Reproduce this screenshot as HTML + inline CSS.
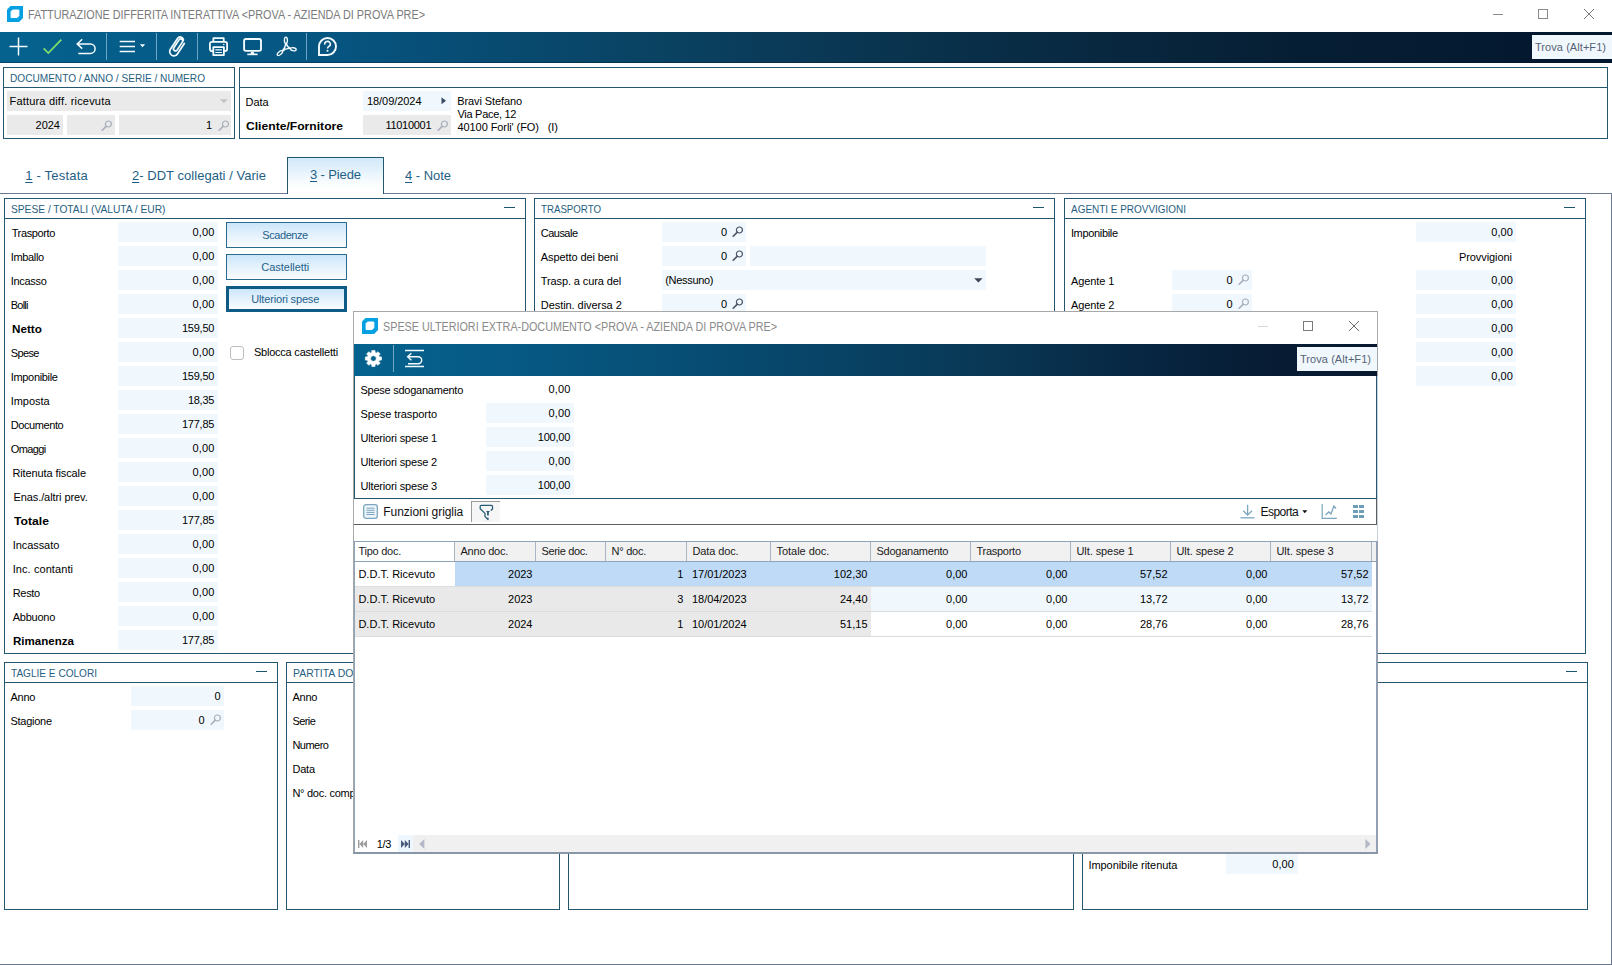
<!DOCTYPE html>
<html><head><meta charset="utf-8"><title>Fatturazione differita interattiva</title><style>
html,body{margin:0;padding:0;}
body{width:1612px;height:965px;overflow:hidden;background:#fff;position:relative;font-family:"Liberation Sans", sans-serif;font-size:11px;}
div,span.t,svg{position:absolute;box-sizing:border-box;}
span.t{white-space:pre;line-height:normal;}
u{text-decoration:underline;text-underline-offset:2px;}
</style></head><body>
<svg style="left:7px;top:6px;" width="16" height="16" viewBox="0 0 16 16"><path d="M3.5 0 H16 V12.1 L12.1 16 H0 V3.5 Z" fill="#04a0e2"/><path d="M5.6 4 H11.85 V9.8 L10.1 11.55 H4.1 V5.5 Z" fill="#fff" stroke="#fff" stroke-width="1" stroke-linejoin="round"/></svg>
<span class="t" style="left:27.60px;top:8px;font-size:12px;color:#7b7b7b;transform:scaleX(0.9035);transform-origin:0 0;">FATTURAZIONE DIFFERITA INTERATTIVA &lt;PROVA - AZIENDA DI PROVA PRE&gt;</span>
<div style="left:1493px;top:14px;width:10px;height:1px;background:#8a8a8a;"></div>
<div style="left:1538px;top:9px;width:10px;height:10px;border:1px solid #8a8a8a;"></div>
<svg style="left:1584px;top:9px;" width="10" height="10" viewBox="0 0 10 10"><path d="M0 0 L10 10 M10 0 L0 10" stroke="#7a7a7a" stroke-width="1"/></svg>
<div style="left:0px;top:32px;width:1612px;height:31px;background:linear-gradient(90deg,#05628e 0px,#065480 340px,#0a4262 660px,#092d46 1000px,#061e34 1300px,#04192f 1530px,#04192f 1612px);"></div>
<div style="left:0px;top:62px;width:1612px;height:1px;background:rgba(0,20,50,0.35);"></div>
<svg style="left:9px;top:37px;" width="19" height="19" viewBox="0 0 19 19"><path d="M9.5 0.5 V18.5 M0.5 9.5 H18.5" stroke="#f4fbff" stroke-width="1.5" fill="none"/></svg>
<svg style="left:42px;top:38px;" width="21" height="17" viewBox="0 0 21 17"><path d="M1.6 10.4 L6.3 15 L19.3 1.6" stroke="#82de6c" stroke-width="1.7" fill="none" stroke-linejoin="miter"/></svg>
<svg style="left:76px;top:38px;" width="21" height="17" viewBox="0 0 21 17"><path d="M6.2 1.2 L1.2 5.9 L6.2 10.6 M1.2 5.9 H14.3 A4.8 4.8 0 0 1 14.3 15.5 H2.3" stroke="#f4fbff" stroke-width="1.5" fill="none"/></svg>
<div style="left:106px;top:33px;width:1px;height:27px;background:rgba(190,230,255,0.55);"></div>
<svg style="left:119px;top:40px;" width="28" height="13" viewBox="0 0 28 13"><path d="M0.7 1.4 H16 M0.7 6.4 H16 M0.7 11.4 H16" stroke="#f4fbff" stroke-width="1.5"/><path d="M20.8 4.2 H26.2 L23.5 7.2 Z" fill="#f4fbff"/></svg>
<div style="left:156px;top:33px;width:1px;height:27px;background:rgba(190,230,255,0.55);"></div>
<svg style="left:164px;top:33px;" width="30" height="28" viewBox="0 0 30 28"><g transform="translate(9.9 18.6) rotate(33.6)"><path d="M4.2 -12.5 V0 A4.2 4.2 0 0 1 -4.2 0 V-13.2 A3 3 0 0 1 1.8 -13.2 V-3.2 A2 2 0 0 1 -2.2 -3.2 V-12.6 A2 2 0 0 1 1.8 -12.6" stroke="#f4fbff" stroke-width="1.7" fill="none" stroke-linecap="round"/></g></svg>
<div style="left:197px;top:33px;width:1px;height:27px;background:rgba(190,230,255,0.55);"></div>
<svg style="left:208px;top:36px;" width="21" height="21" viewBox="0 0 21 21"><g stroke="#f4fbff" stroke-width="1.8" fill="none" stroke-linejoin="round"><path d="M5.4 5.9 V2.1 H15.7 V5.9"/><path d="M5.3 15.1 H3.9 A2 2 0 0 1 1.9 13.1 V7.9 A2 2 0 0 1 3.9 5.9 H17.1 A2 2 0 0 1 19.1 7.9 V13.1 A2 2 0 0 1 17.1 15.1 H15.9"/><rect x="5.3" y="11.2" width="10.6" height="7.9"/><path d="M7.3 13.9 H13.9 M7.3 16.5 H13.9" stroke-width="1.1"/></g><circle cx="15.8" cy="8.5" r="0.8" fill="#f4fbff"/></svg>
<svg style="left:242px;top:37px;" width="21" height="19" viewBox="0 0 21 19"><rect x="2.1" y="2" width="16.9" height="11.9" rx="1.8" stroke="#f4fbff" stroke-width="1.9" fill="none"/><path d="M9.2 14.8 H11.6 L12.6 17 H8.2 Z" fill="#f4fbff"/><path d="M5.3 17.4 H15.6" stroke="#f4fbff" stroke-width="1.6"/></svg>
<svg style="left:276px;top:36px;" width="22" height="21" viewBox="0 0 22 21"><g stroke="#f4fbff" fill="none" stroke-width="1.35"><ellipse cx="9.9" cy="4.3" rx="1.5" ry="3.2"/><ellipse cx="17.3" cy="13.2" rx="2.9" ry="1.5" transform="rotate(12 17.3 13.2)"/><ellipse cx="3.9" cy="17.1" rx="3.2" ry="1.5" transform="rotate(-40 3.9 17.1)"/><path d="M9.8 7.4 C9.5 10.4 8.2 13.2 6.3 15.1 M10.3 7.4 C10.8 9.8 12.4 11.7 14.6 12.5 M6.3 15.1 C8.6 13.1 11.6 12.1 14.6 12.5" stroke-width="1.4"/></g></svg>
<div style="left:306px;top:33px;width:1px;height:27px;background:rgba(190,230,255,0.55);"></div>
<svg style="left:317px;top:36px;" width="21" height="21" viewBox="0 0 21 21"><path d="M2 19 V10.5 A8.5 8.5 0 1 1 10.5 19 Z" stroke="#f4fbff" stroke-width="1.9" fill="none"/><path d="M7.8 8.6 A2.8 2.6 0 1 1 11.9 10.3 C10.9 10.9 10.5 11.4 10.5 12.5" stroke="#f4fbff" stroke-width="1.5" fill="none"/><circle cx="10.5" cy="14.7" r="1.0" fill="#f4fbff"/></svg>
<div style="left:1532px;top:35px;width:80px;height:24px;background:#f0f8fe;"></div>
<span class="t" style="left:1535.00px;top:41px;font-size:11px;color:#566273;letter-spacing:0.061px;">Trova (Alt+F1)</span>
<div style="left:3px;top:67px;width:232px;height:72px;background:#fff;border:1px solid #24566f;"></div>
<div style="left:3px;top:87px;width:232px;height:1px;background:#24566f;"></div>
<span class="t" style="left:9.50px;top:72px;font-size:11px;color:#27607f;transform:scaleX(0.9176);transform-origin:0 0;">DOCUMENTO / ANNO / SERIE / NUMERO</span>
<div style="left:7px;top:91px;width:224px;height:20px;background:#eaeaea;"></div>
<span class="t" style="left:9.50px;top:95px;font-size:11px;color:#000;letter-spacing:0.190px;">Fattura diff. ricevuta</span>
<svg style="left:220px;top:99px;" width="8" height="5" viewBox="0 0 8 5"><path d="M0 0.3 H7.6 L3.8 4.2 Z" fill="#c3c3c3"/></svg>
<div style="left:7px;top:115px;width:56px;height:20px;background:#eaeaea;"></div>
<span class="t" style="left:35.52px;top:119px;font-size:11px;color:#000;">2024</span>
<div style="left:67px;top:115px;width:48px;height:20px;background:#eaeaea;"></div>
<svg style="left:101px;top:120px;" width="12" height="11" viewBox="0 0 12 11"><circle cx="7.4" cy="4.0" r="3.0" fill="none" stroke="#a9afbb" stroke-width="1.2"/><path d="M5.1 6.4 L1.2 10.2" stroke="#a9afbb" stroke-width="1.6" stroke-linecap="round"/></svg>
<div style="left:119px;top:115px;width:112px;height:20px;background:#eaeaea;"></div>
<span class="t" style="left:205.88px;top:119px;font-size:11px;color:#000;">1</span>
<svg style="left:218px;top:120px;" width="12" height="11" viewBox="0 0 12 11"><circle cx="7.4" cy="4.0" r="3.0" fill="none" stroke="#a9afbb" stroke-width="1.2"/><path d="M5.1 6.4 L1.2 10.2" stroke="#a9afbb" stroke-width="1.6" stroke-linecap="round"/></svg>
<div style="left:239px;top:67px;width:1369px;height:72px;background:#fff;border:1px solid #24566f;"></div>
<div style="left:239px;top:87px;width:1369px;height:1px;background:#24566f;"></div>
<span class="t" style="left:245.50px;top:96px;font-size:11px;color:#000;">Data</span>
<span class="t" style="left:246.00px;top:120px;font-size:11px;color:#000;font-weight:bold;transform:scaleX(1.1021);transform-origin:0 0;">Cliente/Fornitore</span>
<div style="left:363px;top:91px;width:88px;height:20px;background:#f0f8fe;"></div>
<span class="t" style="left:367.00px;top:95px;font-size:11px;color:#000;letter-spacing:-0.062px;">18/09/2024</span>
<svg style="left:441px;top:97px;" width="6" height="8" viewBox="0 0 6 8"><path d="M0.5 0.3 L5 3.8 L0.5 7.3 Z" fill="#3a4a66"/></svg>
<div style="left:363px;top:115px;width:88px;height:20px;background:#eaeaea;"></div>
<span class="t" style="left:385.50px;top:119px;font-size:11px;color:#000;letter-spacing:-0.304px;">11010001</span>
<svg style="left:437px;top:120px;" width="12" height="11" viewBox="0 0 12 11"><circle cx="7.4" cy="4.0" r="3.0" fill="none" stroke="#a9afbb" stroke-width="1.2"/><path d="M5.1 6.4 L1.2 10.2" stroke="#a9afbb" stroke-width="1.6" stroke-linecap="round"/></svg>
<span class="t" style="left:457.20px;top:95px;font-size:11px;color:#000;letter-spacing:-0.087px;">Bravi Stefano</span>
<span class="t" style="left:457.50px;top:107.5px;font-size:11px;color:#000;letter-spacing:-0.290px;">Via Pace, 12</span>
<span class="t" style="left:457.50px;top:120.5px;font-size:11px;color:#000;letter-spacing:-0.084px;">40100 Forli&#x27; (FO)   (I)</span>
<div style="left:0px;top:193px;width:1612px;height:1px;background:#6b7a90;"></div>
<div style="left:1611px;top:193px;width:1px;height:772px;background:#6b7a90;"></div>
<div style="left:0px;top:964px;width:1612px;height:1px;background:#6b7a90;"></div>
<div style="left:287px;top:157px;width:97px;height:37px;background:linear-gradient(180deg,#d2e9f9 0%,#e4f2fc 35%,#f6fbfe 65%,#ffffff 85%);border:1px solid #24566f;border-bottom:none;"></div>
<span class="t" style="left:25.20px;top:168px;font-size:13px;color:#1f5f85;letter-spacing:0.203px;"><u>1</u> - Testata</span>
<span class="t" style="left:132.00px;top:168px;font-size:13px;color:#1f5f85;letter-spacing:0.035px;"><u>2</u>- DDT collegati / Varie</span>
<span class="t" style="left:310.00px;top:167px;font-size:13px;color:#1f5f85;letter-spacing:-0.131px;"><u>3</u> - Piede</span>
<span class="t" style="left:405.00px;top:168px;font-size:13px;color:#1f5f85;letter-spacing:-0.036px;"><u>4</u> - Note</span>
<div style="left:4px;top:198px;width:522px;height:456px;background:#fff;border:1px solid #24566f;"></div>
<div style="left:4px;top:218px;width:522px;height:1px;background:#24566f;"></div>
<span class="t" style="left:10.50px;top:203px;font-size:11px;color:#27607f;transform:scaleX(0.9280);transform-origin:0 0;">SPESE / TOTALI (VALUTA / EUR)</span>
<div style="left:504px;top:207px;width:11px;height:1px;background:#1d5470;"></div>
<div style="left:118px;top:222px;width:100px;height:20px;background:#f0f8fe;"></div>
<span class="t" style="left:11.70px;top:227px;font-size:11px;color:#000;letter-spacing:-0.384px;">Trasporto</span>
<span class="t" style="left:192.60px;top:226px;font-size:11px;color:#000;letter-spacing:0.126px;">0,00</span>
<div style="left:118px;top:246px;width:100px;height:20px;background:#f0f8fe;"></div>
<span class="t" style="left:10.70px;top:251px;font-size:11px;color:#000;letter-spacing:-0.328px;">Imballo</span>
<span class="t" style="left:192.60px;top:250px;font-size:11px;color:#000;letter-spacing:0.126px;">0,00</span>
<div style="left:118px;top:270px;width:100px;height:20px;background:#f0f8fe;"></div>
<span class="t" style="left:10.70px;top:275px;font-size:11px;color:#000;letter-spacing:-0.287px;">Incasso</span>
<span class="t" style="left:192.60px;top:274px;font-size:11px;color:#000;letter-spacing:0.126px;">0,00</span>
<div style="left:118px;top:294px;width:100px;height:20px;background:#f0f8fe;"></div>
<span class="t" style="left:10.70px;top:299px;font-size:11px;color:#000;letter-spacing:-0.749px;">Bolli</span>
<span class="t" style="left:192.60px;top:298px;font-size:11px;color:#000;letter-spacing:0.126px;">0,00</span>
<div style="left:118px;top:318px;width:100px;height:20px;background:#f0f8fe;"></div>
<span class="t" style="left:11.70px;top:323px;font-size:11px;color:#000;font-weight:bold;transform:scaleX(1.0601);transform-origin:0 0;">Netto</span>
<span class="t" style="left:181.90px;top:322px;font-size:11px;color:#000;letter-spacing:-0.231px;">159,50</span>
<div style="left:118px;top:342px;width:100px;height:20px;background:#f0f8fe;"></div>
<span class="t" style="left:10.70px;top:347px;font-size:11px;color:#000;letter-spacing:-0.601px;">Spese</span>
<span class="t" style="left:192.60px;top:346px;font-size:11px;color:#000;letter-spacing:0.126px;">0,00</span>
<div style="left:118px;top:366px;width:100px;height:20px;background:#f0f8fe;"></div>
<span class="t" style="left:10.70px;top:371px;font-size:11px;color:#000;letter-spacing:-0.316px;">Imponibile</span>
<span class="t" style="left:181.90px;top:370px;font-size:11px;color:#000;letter-spacing:-0.231px;">159,50</span>
<div style="left:118px;top:390px;width:100px;height:20px;background:#f0f8fe;"></div>
<span class="t" style="left:10.70px;top:395px;font-size:11px;color:#000;letter-spacing:-0.040px;">Imposta</span>
<span class="t" style="left:187.90px;top:394px;font-size:11px;color:#000;letter-spacing:-0.258px;">18,35</span>
<div style="left:118px;top:414px;width:100px;height:20px;background:#f0f8fe;"></div>
<span class="t" style="left:10.70px;top:419px;font-size:11px;color:#000;letter-spacing:-0.408px;">Documento</span>
<span class="t" style="left:181.90px;top:418px;font-size:11px;color:#000;letter-spacing:-0.231px;">177,85</span>
<div style="left:118px;top:438px;width:100px;height:20px;background:#f0f8fe;"></div>
<span class="t" style="left:10.70px;top:443px;font-size:11px;color:#000;letter-spacing:-0.606px;">Omaggi</span>
<span class="t" style="left:192.60px;top:442px;font-size:11px;color:#000;letter-spacing:0.126px;">0,00</span>
<div style="left:118px;top:462px;width:100px;height:20px;background:#f0f8fe;"></div>
<span class="t" style="left:12.40px;top:467px;font-size:11px;color:#000;letter-spacing:-0.101px;">Ritenuta fiscale</span>
<span class="t" style="left:192.60px;top:466px;font-size:11px;color:#000;letter-spacing:0.126px;">0,00</span>
<div style="left:118px;top:486px;width:100px;height:20px;background:#f0f8fe;"></div>
<span class="t" style="left:13.40px;top:491px;font-size:11px;color:#000;letter-spacing:-0.076px;">Enas./altri prev.</span>
<span class="t" style="left:192.60px;top:490px;font-size:11px;color:#000;letter-spacing:0.126px;">0,00</span>
<div style="left:118px;top:510px;width:100px;height:20px;background:#f0f8fe;"></div>
<span class="t" style="left:14.00px;top:515px;font-size:11px;color:#000;font-weight:bold;transform:scaleX(1.1052);transform-origin:0 0;">Totale</span>
<span class="t" style="left:181.90px;top:514px;font-size:11px;color:#000;letter-spacing:-0.231px;">177,85</span>
<div style="left:118px;top:534px;width:100px;height:20px;background:#f0f8fe;"></div>
<span class="t" style="left:12.70px;top:539px;font-size:11px;color:#000;letter-spacing:-0.062px;">Incassato</span>
<span class="t" style="left:192.60px;top:538px;font-size:11px;color:#000;letter-spacing:0.126px;">0,00</span>
<div style="left:118px;top:558px;width:100px;height:20px;background:#f0f8fe;"></div>
<span class="t" style="left:12.70px;top:563px;font-size:11px;color:#000;letter-spacing:0.081px;">Inc. contanti</span>
<span class="t" style="left:192.60px;top:562px;font-size:11px;color:#000;letter-spacing:0.126px;">0,00</span>
<div style="left:118px;top:582px;width:100px;height:20px;background:#f0f8fe;"></div>
<span class="t" style="left:12.70px;top:587px;font-size:11px;color:#000;letter-spacing:-0.312px;">Resto</span>
<span class="t" style="left:192.60px;top:586px;font-size:11px;color:#000;letter-spacing:0.126px;">0,00</span>
<div style="left:118px;top:606px;width:100px;height:20px;background:#f0f8fe;"></div>
<span class="t" style="left:12.70px;top:611px;font-size:11px;color:#000;letter-spacing:-0.241px;">Abbuono</span>
<span class="t" style="left:192.60px;top:610px;font-size:11px;color:#000;letter-spacing:0.126px;">0,00</span>
<div style="left:118px;top:630px;width:100px;height:20px;background:#f0f8fe;"></div>
<span class="t" style="left:13.40px;top:635px;font-size:11px;color:#000;font-weight:bold;transform:scaleX(1.0503);transform-origin:0 0;">Rimanenza</span>
<span class="t" style="left:181.90px;top:634px;font-size:11px;color:#000;letter-spacing:-0.231px;">177,85</span>
<div style="left:226px;top:222px;width:121px;height:26px;background:linear-gradient(180deg,#cbe6fa 0%,#e2f1fc 45%,#f9fcff 100%);border:1px solid #2a6a8e;"></div>
<span class="t" style="left:262.35px;top:229px;font-size:11px;color:#1f628c;letter-spacing:-0.434px;">Scadenze</span>
<div style="left:226px;top:254px;width:121px;height:26px;background:linear-gradient(180deg,#cbe6fa 0%,#e2f1fc 45%,#f9fcff 100%);border:1px solid #2a6a8e;"></div>
<span class="t" style="left:261.35px;top:261px;font-size:11px;color:#1f628c;letter-spacing:-0.040px;">Castelletti</span>
<div style="left:226px;top:286px;width:121px;height:26px;background:linear-gradient(180deg,#cbe6fa 0%,#e2f1fc 45%,#f9fcff 100%);border:3px solid #0e5c86;"></div>
<span class="t" style="left:251.30px;top:293px;font-size:11px;color:#1f628c;letter-spacing:-0.165px;">Ulteriori spese</span>
<div style="left:229.5px;top:345.5px;width:14px;height:14px;background:#fff;border:1.3px solid #bdbdbd;border-radius:3px;"></div>
<span class="t" style="left:253.90px;top:346px;font-size:11px;color:#000;letter-spacing:-0.214px;">Sblocca castelletti</span>
<div style="left:534px;top:198px;width:521px;height:456px;background:#fff;border:1px solid #24566f;"></div>
<div style="left:534px;top:218px;width:521px;height:1px;background:#24566f;"></div>
<span class="t" style="left:540.50px;top:203px;font-size:11px;color:#27607f;transform:scaleX(0.8815);transform-origin:0 0;">TRASPORTO</span>
<div style="left:1033px;top:207px;width:11px;height:1px;background:#1d5470;"></div>
<span class="t" style="left:540.80px;top:227px;font-size:11px;color:#000;letter-spacing:-0.527px;">Causale</span>
<div style="left:662px;top:222px;width:84px;height:20px;background:#f0f8fe;"></div>
<span class="t" style="left:720.88px;top:226px;font-size:11px;color:#000;">0</span>
<svg style="left:732px;top:226px;" width="12" height="11" viewBox="0 0 12 11"><circle cx="7.4" cy="4.0" r="3.0" fill="none" stroke="#4a5466" stroke-width="1.2"/><path d="M5.1 6.4 L1.2 10.2" stroke="#4a5466" stroke-width="1.6" stroke-linecap="round"/></svg>
<span class="t" style="left:540.80px;top:251px;font-size:11px;color:#000;letter-spacing:-0.093px;">Aspetto dei beni</span>
<div style="left:662px;top:246px;width:84px;height:20px;background:#f0f8fe;"></div>
<span class="t" style="left:720.88px;top:250px;font-size:11px;color:#000;">0</span>
<svg style="left:732px;top:250px;" width="12" height="11" viewBox="0 0 12 11"><circle cx="7.4" cy="4.0" r="3.0" fill="none" stroke="#4a5466" stroke-width="1.2"/><path d="M5.1 6.4 L1.2 10.2" stroke="#4a5466" stroke-width="1.6" stroke-linecap="round"/></svg>
<div style="left:750px;top:246px;width:236px;height:20px;background:#f0f8fe;"></div>
<span class="t" style="left:540.80px;top:275px;font-size:11px;color:#000;letter-spacing:-0.115px;">Trasp. a cura del</span>
<div style="left:662px;top:270px;width:324px;height:20px;background:#f0f8fe;"></div>
<span class="t" style="left:665.20px;top:274px;font-size:11px;color:#000;letter-spacing:-0.306px;">(Nessuno)</span>
<svg style="left:974px;top:278px;" width="9" height="5" viewBox="0 0 9 5"><path d="M0.2 0.3 H8.6 L4.4 4.6 Z" fill="#3c4656"/></svg>
<span class="t" style="left:540.80px;top:299px;font-size:11px;color:#000;letter-spacing:-0.059px;">Destin. diversa 2</span>
<div style="left:662px;top:294px;width:84px;height:20px;background:#f0f8fe;"></div>
<span class="t" style="left:720.88px;top:298px;font-size:11px;color:#000;">0</span>
<svg style="left:732px;top:298px;" width="12" height="11" viewBox="0 0 12 11"><circle cx="7.4" cy="4.0" r="3.0" fill="none" stroke="#4a5466" stroke-width="1.2"/><path d="M5.1 6.4 L1.2 10.2" stroke="#4a5466" stroke-width="1.6" stroke-linecap="round"/></svg>
<div style="left:1064px;top:198px;width:522px;height:456px;background:#fff;border:1px solid #24566f;"></div>
<div style="left:1064px;top:218px;width:522px;height:1px;background:#24566f;"></div>
<span class="t" style="left:1070.50px;top:203px;font-size:11px;color:#27607f;transform:scaleX(0.9045);transform-origin:0 0;">AGENTI E PROVVIGIONI</span>
<div style="left:1564px;top:207px;width:11px;height:1px;background:#1d5470;"></div>
<span class="t" style="left:1070.90px;top:227px;font-size:11px;color:#000;letter-spacing:-0.327px;">Imponibile</span>
<div style="left:1416px;top:222px;width:100px;height:20px;background:#f0f8fe;"></div>
<span class="t" style="left:1491.20px;top:226px;font-size:11px;color:#000;letter-spacing:0.126px;">0,00</span>
<span class="t" style="left:1459.00px;top:251px;font-size:11px;color:#000;letter-spacing:-0.081px;">Provvigioni</span>
<span class="t" style="left:1070.90px;top:275px;font-size:11px;color:#000;letter-spacing:-0.064px;">Agente 1</span>
<div style="left:1172px;top:270px;width:80px;height:20px;background:#f0f8fe;"></div>
<span class="t" style="left:1226.38px;top:274px;font-size:11px;color:#000;">0</span>
<svg style="left:1238px;top:274px;" width="12" height="11" viewBox="0 0 12 11"><circle cx="7.4" cy="4.0" r="3.0" fill="none" stroke="#a9afbb" stroke-width="1.2"/><path d="M5.1 6.4 L1.2 10.2" stroke="#a9afbb" stroke-width="1.6" stroke-linecap="round"/></svg>
<span class="t" style="left:1070.90px;top:299px;font-size:11px;color:#000;letter-spacing:-0.064px;">Agente 2</span>
<div style="left:1172px;top:294px;width:80px;height:20px;background:#f0f8fe;"></div>
<span class="t" style="left:1226.38px;top:298px;font-size:11px;color:#000;">0</span>
<svg style="left:1238px;top:298px;" width="12" height="11" viewBox="0 0 12 11"><circle cx="7.4" cy="4.0" r="3.0" fill="none" stroke="#a9afbb" stroke-width="1.2"/><path d="M5.1 6.4 L1.2 10.2" stroke="#a9afbb" stroke-width="1.6" stroke-linecap="round"/></svg>
<div style="left:1416px;top:270px;width:100px;height:20px;background:#f0f8fe;"></div>
<span class="t" style="left:1491.20px;top:274px;font-size:11px;color:#000;letter-spacing:0.126px;">0,00</span>
<div style="left:1416px;top:294px;width:100px;height:20px;background:#f0f8fe;"></div>
<span class="t" style="left:1491.20px;top:298px;font-size:11px;color:#000;letter-spacing:0.126px;">0,00</span>
<div style="left:1416px;top:318px;width:100px;height:20px;background:#f0f8fe;"></div>
<span class="t" style="left:1491.20px;top:322px;font-size:11px;color:#000;letter-spacing:0.126px;">0,00</span>
<div style="left:1416px;top:342px;width:100px;height:20px;background:#f0f8fe;"></div>
<span class="t" style="left:1491.20px;top:346px;font-size:11px;color:#000;letter-spacing:0.126px;">0,00</span>
<div style="left:1416px;top:366px;width:100px;height:20px;background:#f0f8fe;"></div>
<span class="t" style="left:1491.20px;top:370px;font-size:11px;color:#000;letter-spacing:0.126px;">0,00</span>
<div style="left:4px;top:662px;width:274px;height:248px;background:#fff;border:1px solid #24566f;"></div>
<div style="left:4px;top:682px;width:274px;height:1px;background:#24566f;"></div>
<span class="t" style="left:10.50px;top:667px;font-size:11px;color:#27607f;transform:scaleX(0.9155);transform-origin:0 0;">TAGLIE E COLORI</span>
<div style="left:256px;top:671px;width:11px;height:1px;background:#1d5470;"></div>
<span class="t" style="left:10.40px;top:691px;font-size:11px;color:#000;letter-spacing:-0.234px;">Anno</span>
<div style="left:131px;top:686px;width:93px;height:20px;background:#f0f8fe;"></div>
<span class="t" style="left:214.38px;top:690px;font-size:11px;color:#000;">0</span>
<span class="t" style="left:10.40px;top:715px;font-size:11px;color:#000;letter-spacing:-0.248px;">Stagione</span>
<div style="left:131px;top:710px;width:93px;height:20px;background:#f0f8fe;"></div>
<span class="t" style="left:198.38px;top:714px;font-size:11px;color:#000;">0</span>
<svg style="left:210px;top:714px;" width="12" height="11" viewBox="0 0 12 11"><circle cx="7.4" cy="4.0" r="3.0" fill="none" stroke="#a9afbb" stroke-width="1.2"/><path d="M5.1 6.4 L1.2 10.2" stroke="#a9afbb" stroke-width="1.6" stroke-linecap="round"/></svg>
<div style="left:286px;top:662px;width:274px;height:248px;background:#fff;border:1px solid #24566f;"></div>
<div style="left:286px;top:682px;width:274px;height:1px;background:#24566f;"></div>
<span class="t" style="left:292.50px;top:667px;font-size:11px;color:#27607f;transform:scaleX(0.9484);transform-origin:0 0;">PARTITA DO</span>
<span class="t" style="left:292.40px;top:691px;font-size:11px;color:#000;letter-spacing:-0.234px;">Anno</span>
<span class="t" style="left:292.40px;top:715px;font-size:11px;color:#000;letter-spacing:-0.547px;">Serie</span>
<span class="t" style="left:292.40px;top:739px;font-size:11px;color:#000;letter-spacing:-0.525px;">Numero</span>
<span class="t" style="left:292.40px;top:763px;font-size:11px;color:#000;letter-spacing:-0.183px;">Data</span>
<span class="t" style="left:292.40px;top:787px;font-size:11px;color:#000;letter-spacing:-0.269px;">N° doc. comp</span>
<div style="left:568px;top:662px;width:506px;height:248px;background:#fff;border:1px solid #24566f;"></div>
<div style="left:568px;top:682px;width:506px;height:1px;background:#24566f;"></div>
<div style="left:1082px;top:662px;width:506px;height:248px;background:#fff;border:1px solid #24566f;"></div>
<div style="left:1082px;top:682px;width:506px;height:1px;background:#24566f;"></div>
<div style="left:1566px;top:671px;width:11px;height:1px;background:#1d5470;"></div>
<div style="left:1226px;top:854px;width:72px;height:20px;background:#f0f8fe;"></div>
<span class="t" style="left:1088.40px;top:859px;font-size:11px;color:#000;letter-spacing:-0.049px;">Imponibile ritenuta</span>
<span class="t" style="left:1272.20px;top:858px;font-size:11px;color:#000;letter-spacing:0.126px;">0,00</span>
<div style="left:353px;top:311px;width:1025px;height:543px;background:#fff;border:1px solid #a8a8a8;"></div>
<div style="left:1377px;top:376px;width:1px;height:165px;background:#c6d3dc;"></div>
<div style="left:1377px;top:541px;width:1px;height:313px;background:#979ca6;"></div>
<div style="left:353px;top:852px;width:1025px;height:2px;background:#8896a8;"></div>
<svg style="left:362px;top:318px;" width="16" height="16" viewBox="0 0 16 16"><path d="M3.5 0 H16 V12.1 L12.1 16 H0 V3.5 Z" fill="#04a0e2"/><path d="M5.6 4 H11.85 V9.8 L10.1 11.55 H4.1 V5.5 Z" fill="#fff" stroke="#fff" stroke-width="1" stroke-linejoin="round"/></svg>
<span class="t" style="left:382.50px;top:320px;font-size:12px;color:#8a8a8a;transform:scaleX(0.8984);transform-origin:0 0;">SPESE ULTERIORI EXTRA-DOCUMENTO &lt;PROVA - AZIENDA DI PROVA PRE&gt;</span>
<div style="left:1258px;top:326px;width:10px;height:1px;background:#d8d8d8;"></div>
<div style="left:1303px;top:321px;width:10px;height:10px;border:1px solid #7a7a7a;"></div>
<svg style="left:1349px;top:321px;" width="10" height="10" viewBox="0 0 10 10"><path d="M0 0 L10 10 M10 0 L0 10" stroke="#6a6a6a" stroke-width="1"/></svg>
<div style="left:354px;top:344px;width:1023px;height:32px;background:linear-gradient(90deg,#05628e 0px,#065a85 150px,#074a70 380px,#093754 640px,#072541 800px,#071d35 900px,#08192f 1023px);"></div>
<svg style="left:364px;top:349px;" width="19" height="19" viewBox="0 0 19 19"><path d="M15.35 7.77 L17.44 7.90 L17.44 11.10 L15.35 11.23 L14.83 12.49 L16.22 14.06 L13.96 16.32 L12.39 14.93 L11.13 15.45 L11.00 17.54 L7.80 17.54 L7.67 15.45 L6.41 14.93 L4.84 16.32 L2.58 14.06 L3.97 12.49 L3.45 11.23 L1.36 11.10 L1.36 7.90 L3.45 7.77 L3.97 6.51 L2.58 4.94 L4.84 2.68 L6.41 4.07 L7.67 3.55 L7.80 1.46 L11.00 1.46 L11.13 3.55 L12.39 4.07 L13.96 2.68 L16.22 4.94 L14.83 6.51 Z M12.2 9.5 A2.8 2.8 0 1 0 6.6 9.5 A2.8 2.8 0 1 0 12.2 9.5 Z" fill="#fff" fill-rule="evenodd" stroke="#fff" stroke-width="0.6" stroke-linejoin="round"/></svg>
<div style="left:393px;top:345px;width:1px;height:27px;background:rgba(255,255,255,0.45);"></div>
<svg style="left:404px;top:349px;" width="21" height="19" viewBox="0 0 21 19"><path d="M1 1.4 H20 M1 17.6 H20" stroke="#f4fbff" stroke-width="1.5"/><path d="M7.4 4.2 L3.6 7.7 L7.4 11.2 M3.6 7.7 H14.2 A3.5 3.5 0 0 1 14.2 14.7 H4" stroke="#f4fbff" stroke-width="1.4" fill="none"/></svg>
<div style="left:1297px;top:347px;width:80px;height:24px;background:#f0f8fe;"></div>
<span class="t" style="left:1300.00px;top:353px;font-size:11px;color:#566273;letter-spacing:0.061px;">Trova (Alt+F1)</span>
<div style="left:354px;top:376px;width:1023px;height:123px;background:#fff;border:1px solid #24566f;border-top:none;"></div>
<span class="t" style="left:360.50px;top:384px;font-size:11px;color:#000;letter-spacing:-0.249px;">Spese sdoganamento</span>
<span class="t" style="left:548.50px;top:383px;font-size:11px;color:#000;letter-spacing:0.126px;">0,00</span>
<div style="left:486px;top:403px;width:88px;height:20px;background:#f0f8fe;"></div>
<span class="t" style="left:360.50px;top:408px;font-size:11px;color:#000;letter-spacing:-0.083px;">Spese trasporto</span>
<span class="t" style="left:548.50px;top:407px;font-size:11px;color:#000;letter-spacing:0.126px;">0,00</span>
<div style="left:486px;top:427px;width:88px;height:20px;background:#f0f8fe;"></div>
<span class="t" style="left:360.50px;top:432px;font-size:11px;color:#000;letter-spacing:-0.174px;">Ulteriori spese 1</span>
<span class="t" style="left:537.80px;top:431px;font-size:11px;color:#000;letter-spacing:-0.231px;">100,00</span>
<div style="left:486px;top:451px;width:88px;height:20px;background:#f0f8fe;"></div>
<span class="t" style="left:360.50px;top:456px;font-size:11px;color:#000;letter-spacing:-0.174px;">Ulteriori spese 2</span>
<span class="t" style="left:548.50px;top:455px;font-size:11px;color:#000;letter-spacing:0.126px;">0,00</span>
<div style="left:486px;top:475px;width:88px;height:20px;background:#f0f8fe;"></div>
<span class="t" style="left:360.50px;top:480px;font-size:11px;color:#000;letter-spacing:-0.174px;">Ulteriori spese 3</span>
<span class="t" style="left:537.80px;top:479px;font-size:11px;color:#000;letter-spacing:-0.231px;">100,00</span>
<div style="left:354px;top:524px;width:1023px;height:1px;background:#5e5e5e;"></div>
<svg style="left:363px;top:504px;" width="15" height="15" viewBox="0 0 15 15"><rect x="0.7" y="0.7" width="13.6" height="13.6" rx="2.2" fill="#eef6fb" stroke="#7ba6be" stroke-width="1.3"/><path d="M3.4 4.2 H11.6 M3.4 6.3 H11.6 M3.4 8.4 H11.6 M3.4 10.5 H11.6" stroke="#7ba6be" stroke-width="1"/></svg>
<span class="t" style="left:383.30px;top:505px;font-size:12px;color:#111;letter-spacing:-0.048px;">Funzioni griglia</span>
<div style="left:471px;top:501px;width:29px;height:21px;background:#f6f6f6;border-left:1px solid #9a9a9a;border-top:1px solid #9a9a9a;"></div>
<svg style="left:479px;top:504px;" width="15" height="17" viewBox="0 0 15 17"><path d="M12.2 6.3 L13.5 5 V2.3 Q13.5 1.3 12.5 1.3 H2.2 Q1.2 1.3 1.2 2.3 V4.7 L6 9.4 V12.6 L9 15.5 V14" fill="none" stroke="#245a75" stroke-width="1.25" stroke-linejoin="round" stroke-linecap="round"/><path d="M7.1 7 H10.9 L9.8 8.6 V11.5 H8.1 V8.6 Z" fill="#245a75"/></svg>
<svg style="left:1240px;top:504px;" width="15" height="15" viewBox="0 0 15 15"><path d="M7.6 0.8 V11 M3.2 6.8 L7.6 11.2 L12 6.8" fill="none" stroke="#7ba6be" stroke-width="1.3"/><path d="M0.5 13.8 H14.5" stroke="#7ba6be" stroke-width="1.3"/></svg>
<span class="t" style="left:1260.60px;top:505px;font-size:12px;color:#111;letter-spacing:-0.560px;">Esporta</span>
<svg style="left:1302px;top:510px;" width="6" height="4" viewBox="0 0 6 4"><path d="M0.3 0.3 H5.3 L2.8 3.2 Z" fill="#111"/></svg>
<svg style="left:1321px;top:503px;" width="17" height="16" viewBox="0 0 17 16"><path d="M1.2 0.9 V15.3 H15.8" fill="none" stroke="#7ba6be" stroke-width="1.2"/><path d="M4.5 11.9 L7.8 8.9 L9.9 11 L12.9 3 L15 5.5" fill="none" stroke="#7ba6be" stroke-width="1.3"/></svg>
<div style="left:1353.2px;top:505px;width:4.7px;height:2.6px;background:#6e9db7;"></div>
<div style="left:1359.3px;top:505px;width:5px;height:2.6px;background:#6e9db7;"></div>
<div style="left:1353.2px;top:510px;width:4.7px;height:2.6px;background:#6e9db7;"></div>
<div style="left:1359.3px;top:510px;width:5px;height:2.6px;background:#6e9db7;"></div>
<div style="left:1353.2px;top:515px;width:4.7px;height:2.6px;background:#6e9db7;"></div>
<div style="left:1359.3px;top:515px;width:5px;height:2.6px;background:#6e9db7;"></div>
<div style="left:354px;top:541px;width:1px;height:311px;background:#8fa3bb;"></div>
<div style="left:1376px;top:541px;width:1px;height:311px;background:#8fa3bb;"></div>
<div style="left:1376px;top:499px;width:1px;height:26px;background:#5e5e5e;"></div>
<div style="left:355px;top:541px;width:1021px;height:1px;background:#8fa3bb;"></div>
<div style="left:355px;top:542px;width:1021px;height:19px;background:#f1f1f1;"></div>
<div style="left:355px;top:542px;width:99px;height:19px;background:#fff;"></div>
<div style="left:355px;top:561px;width:1021px;height:1px;background:#8fa3bb;"></div>
<div style="left:454px;top:542px;width:1px;height:19px;background:#a9b6c6;"></div>
<div style="left:535px;top:542px;width:1px;height:19px;background:#a9b6c6;"></div>
<div style="left:605px;top:542px;width:1px;height:19px;background:#a9b6c6;"></div>
<div style="left:686px;top:542px;width:1px;height:19px;background:#a9b6c6;"></div>
<div style="left:770px;top:542px;width:1px;height:19px;background:#a9b6c6;"></div>
<div style="left:870px;top:542px;width:1px;height:19px;background:#a9b6c6;"></div>
<div style="left:970px;top:542px;width:1px;height:19px;background:#a9b6c6;"></div>
<div style="left:1070px;top:542px;width:1px;height:19px;background:#a9b6c6;"></div>
<div style="left:1170px;top:542px;width:1px;height:19px;background:#a9b6c6;"></div>
<div style="left:1270px;top:542px;width:1px;height:19px;background:#a9b6c6;"></div>
<div style="left:1371px;top:542px;width:1px;height:19px;background:#a9b6c6;"></div>
<span class="t" style="left:358.50px;top:545px;font-size:11px;color:#1a1a1a;letter-spacing:-0.268px;">Tipo doc.</span>
<span class="t" style="left:460.50px;top:545px;font-size:11px;color:#1a1a1a;letter-spacing:-0.218px;">Anno doc.</span>
<span class="t" style="left:541.50px;top:545px;font-size:11px;color:#1a1a1a;letter-spacing:-0.348px;">Serie doc.</span>
<span class="t" style="left:611.50px;top:545px;font-size:11px;color:#1a1a1a;letter-spacing:-0.234px;">N° doc.</span>
<span class="t" style="left:692.50px;top:545px;font-size:11px;color:#1a1a1a;letter-spacing:-0.124px;">Data doc.</span>
<span class="t" style="left:776.50px;top:545px;font-size:11px;color:#1a1a1a;letter-spacing:-0.030px;">Totale doc.</span>
<span class="t" style="left:876.50px;top:545px;font-size:11px;color:#1a1a1a;letter-spacing:-0.239px;">Sdoganamento</span>
<span class="t" style="left:976.50px;top:545px;font-size:11px;color:#1a1a1a;letter-spacing:-0.271px;">Trasporto</span>
<span class="t" style="left:1076.50px;top:545px;font-size:11px;color:#1a1a1a;letter-spacing:-0.081px;">Ult. spese 1</span>
<span class="t" style="left:1176.50px;top:545px;font-size:11px;color:#1a1a1a;letter-spacing:-0.081px;">Ult. spese 2</span>
<span class="t" style="left:1276.50px;top:545px;font-size:11px;color:#1a1a1a;letter-spacing:-0.081px;">Ult. spese 3</span>
<div style="left:455px;top:562px;width:917px;height:24px;background:#bedaf7;"></div>
<div style="left:355px;top:587px;width:516px;height:24px;background:#e9e9e9;"></div>
<div style="left:871px;top:587px;width:501px;height:24px;background:#f0f8fe;"></div>
<div style="left:355px;top:612px;width:516px;height:24px;background:#e9e9e9;"></div>
<div style="left:355px;top:586px;width:1017px;height:1px;background:#dcdcdc;"></div>
<div style="left:355px;top:611px;width:1017px;height:1px;background:#dcdcdc;"></div>
<div style="left:355px;top:636px;width:1017px;height:1px;background:#dcdcdc;"></div>
<span class="t" style="left:358.40px;top:568px;font-size:11px;color:#000;letter-spacing:0.020px;">D.D.T. Ricevuto</span>
<span class="t" style="left:508.02px;top:568px;font-size:11px;color:#000;">2023</span>
<span class="t" style="left:677.17px;top:568px;font-size:11px;color:#000;">1</span>
<span class="t" style="left:692.00px;top:568px;font-size:11px;color:#000;letter-spacing:-0.051px;">17/01/2023</span>
<span class="t" style="left:833.84px;top:568px;font-size:11px;color:#000;">102,30</span>
<span class="t" style="left:946.08px;top:568px;font-size:11px;color:#000;">0,00</span>
<span class="t" style="left:1046.08px;top:568px;font-size:11px;color:#000;">0,00</span>
<span class="t" style="left:1139.97px;top:568px;font-size:11px;color:#000;">57,52</span>
<span class="t" style="left:1246.08px;top:568px;font-size:11px;color:#000;">0,00</span>
<span class="t" style="left:1340.97px;top:568px;font-size:11px;color:#000;">57,52</span>
<span class="t" style="left:358.40px;top:593px;font-size:11px;color:#000;letter-spacing:0.020px;">D.D.T. Ricevuto</span>
<span class="t" style="left:508.02px;top:593px;font-size:11px;color:#000;">2023</span>
<span class="t" style="left:677.17px;top:593px;font-size:11px;color:#000;">3</span>
<span class="t" style="left:692.00px;top:593px;font-size:11px;color:#000;letter-spacing:-0.051px;">18/04/2023</span>
<span class="t" style="left:839.97px;top:593px;font-size:11px;color:#000;">24,40</span>
<span class="t" style="left:946.08px;top:593px;font-size:11px;color:#000;">0,00</span>
<span class="t" style="left:1046.08px;top:593px;font-size:11px;color:#000;">0,00</span>
<span class="t" style="left:1139.97px;top:593px;font-size:11px;color:#000;">13,72</span>
<span class="t" style="left:1246.08px;top:593px;font-size:11px;color:#000;">0,00</span>
<span class="t" style="left:1340.97px;top:593px;font-size:11px;color:#000;">13,72</span>
<span class="t" style="left:358.40px;top:618px;font-size:11px;color:#000;letter-spacing:0.020px;">D.D.T. Ricevuto</span>
<span class="t" style="left:508.02px;top:618px;font-size:11px;color:#000;">2024</span>
<span class="t" style="left:677.17px;top:618px;font-size:11px;color:#000;">1</span>
<span class="t" style="left:692.00px;top:618px;font-size:11px;color:#000;letter-spacing:-0.051px;">10/01/2024</span>
<span class="t" style="left:839.97px;top:618px;font-size:11px;color:#000;">51,15</span>
<span class="t" style="left:946.08px;top:618px;font-size:11px;color:#000;">0,00</span>
<span class="t" style="left:1046.08px;top:618px;font-size:11px;color:#000;">0,00</span>
<span class="t" style="left:1139.97px;top:618px;font-size:11px;color:#000;">28,76</span>
<span class="t" style="left:1246.08px;top:618px;font-size:11px;color:#000;">0,00</span>
<span class="t" style="left:1340.97px;top:618px;font-size:11px;color:#000;">28,76</span>
<div style="left:413px;top:835px;width:963px;height:17px;background:#f0f0f0;"></div>
<div style="left:398px;top:835px;width:15px;height:17px;background:#eef7fd;"></div>
<svg style="left:358px;top:840px;" width="9" height="8" viewBox="0 0 9 8"><path d="M0 0 H1.4 V8 H0 Z M5.2 0 V8 L1.4 4 Z M9 0 V8 L5.2 4 Z" fill="#9c9c9c"/></svg>
<span class="t" style="left:376.70px;top:838px;font-size:11px;color:#000;letter-spacing:-0.348px;">1/3</span>
<svg style="left:401px;top:840px;" width="9" height="8" viewBox="0 0 9 8"><path d="M9 0 H7.6 V8 H9 Z M3.8 0 V8 L7.6 4 Z M0 0 V8 L3.8 4 Z" fill="#4b5b7b"/></svg>
<svg style="left:419px;top:838.5px;" width="6" height="10" viewBox="0 0 6 10"><path d="M5.4 0 V10 L0.2 5 Z" fill="#b4b9c8"/></svg>
<svg style="left:1364.7px;top:838.5px;" width="6" height="10" viewBox="0 0 6 10"><path d="M0.4 0 V10 L5.6 5 Z" fill="#b4b9c8"/></svg>
</body></html>
